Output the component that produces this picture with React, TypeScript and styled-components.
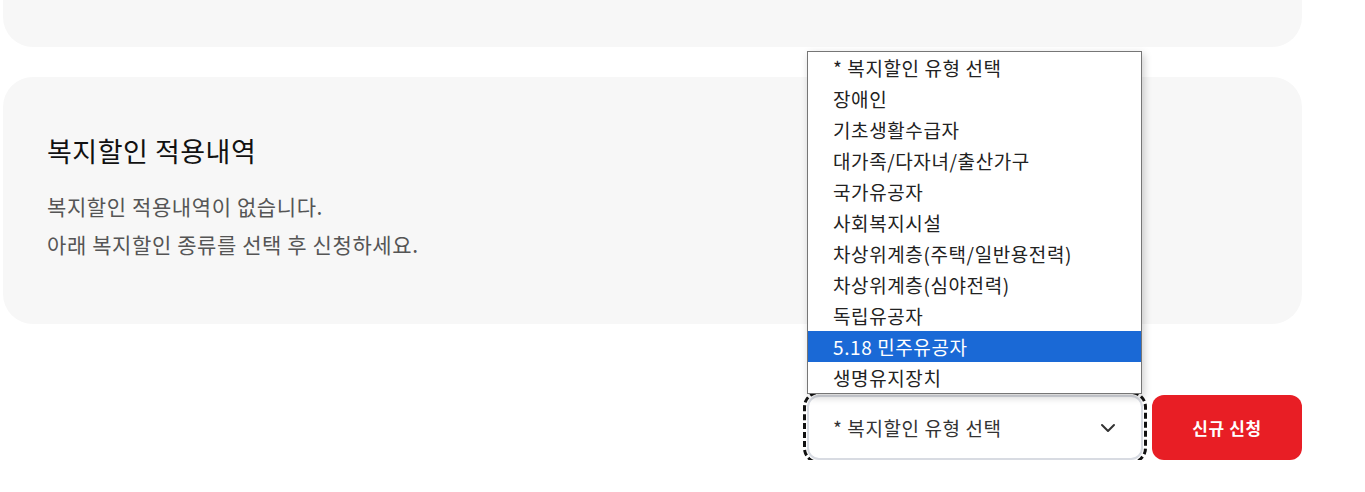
import React, { useState } from 'react';
import styled, { createGlobalStyle } from 'styled-components';

const GlobalStyle = createGlobalStyle`
	html, body {
		margin: 0;
		padding: 0;
		background: #fff;
	}
	body {
		font-family: "Noto Sans CJK KR", "Noto Sans", sans-serif;
		color: #222;
	}
`;

const OPTIONS = [
	'* 복지할인 유형 선택',
	'장애인',
	'기초생활수급자',
	'대가족/다자녀/출산가구',
	'국가유공자',
	'사회복지시설',
	'차상위계층(주택/일반용전력)',
	'차상위계층(심야전력)',
	'독립유공자',
	'5.18 민주유공자',
	'생명유지장치',
];

const App = () => {
	const [hovered, setHovered] = useState(9);

	return (
		<>
			<GlobalStyle />
			<Page>
				<TopCard />
				<HistoryCard>
					<h2 className="title">복지할인 적용내역</h2>
					<p className="desc">
						복지할인 적용내역이 없습니다.
						<br />
						아래 복지할인 종류를 선택 후 신청하세요.
					</p>
				</HistoryCard>
				<ApplyRow>
					<SelectWrap>
						<OptionList>
							{OPTIONS.map((opt, i) => (
								<OptionItem
									key={opt}
									$active={i === hovered}
									onMouseEnter={() => setHovered(i)}
								>
									{opt}
								</OptionItem>
							))}
						</OptionList>
						<SelectBox>
							<span>* 복지할인 유형 선택</span>
							<svg width="16" height="10" viewBox="0 0 16 10" fill="none">
								<path d="M2 2l6 6 6-6" stroke="#333" strokeWidth="2" strokeLinecap="round" strokeLinejoin="round" />
							</svg>
						</SelectBox>
					</SelectWrap>
					<ApplyButton>신규 신청</ApplyButton>
				</ApplyRow>
			</Page>
		</>
	);
};

const Page = styled.div`
	width: 1299px;
	margin-left: 3px;
	display: flex;
	flex-direction: column;
`;

const TopCard = styled.div`
	height: 47px;
	background: #f7f7f7;
	border-radius: 0 0 30px 30px;
`;

const HistoryCard = styled.div`
	margin-top: 30px;
	height: 247px;
	box-sizing: border-box;
	padding: 56px 44px 0;
	background: #f7f7f7;
	border-radius: 30px;

	.title {
		margin: 0;
		font-size: 27px;
		line-height: 36px;
		font-weight: 400;
		letter-spacing: 0.5px;
		color: #111;
	}
	.desc {
		margin: 18px 0 0;
		font-size: 21px;
		line-height: 38px;
		font-weight: 400;
		letter-spacing: 0.6px;
		color: #555;
	}
`;

const ApplyRow = styled.div`
	margin-top: 71px;
	display: flex;
	justify-content: flex-end;
	gap: 9px;
`;

const SelectWrap = styled.div`
	position: relative;
	width: 336px;
`;

const SelectBox = styled.div`
	height: 65px;
	box-sizing: border-box;
	padding: 0 25px 0 24px;
	display: flex;
	align-items: center;
	justify-content: space-between;
	background: #fff;
	border: 2px solid #d8dbe2;
	border-radius: 12px;
	outline: 3px dashed #111;
	outline-offset: 1px;
	font-size: 19px;
	letter-spacing: 0.6px;
	color: #333;
`;

const OptionList = styled.ul`
	position: absolute;
	left: 0;
	bottom: 66px;
	width: 335px;
	margin: 0;
	padding: 0;
	list-style: none;
	box-sizing: border-box;
	background: #fff;
	border: 1px solid #767676;
	box-shadow: 2px 3px 8px rgba(0, 0, 0, 0.2);
	z-index: 2;
`;

const OptionItem = styled.li<{ $active: boolean }>`
	height: 31px;
	padding-left: 25px;
	font-size: 19px;
	line-height: 31px;
	letter-spacing: 0.6px;
	white-space: nowrap;
	background: ${(p) => (p.$active ? '#1a69d6' : 'transparent')};
	color: ${(p) => (p.$active ? '#fff' : '#222')};
	cursor: default;
`;

const ApplyButton = styled.button`
	width: 150px;
	height: 65px;
	border: 0;
	border-radius: 12px;
	background: #e81e25;
	color: #fff;
	font-family: "Noto Sans CJK KR", "Noto Sans", sans-serif;
	font-size: 17px;
	font-weight: 700;
	letter-spacing: 0.6px;
	cursor: pointer;
`;

export default App;
